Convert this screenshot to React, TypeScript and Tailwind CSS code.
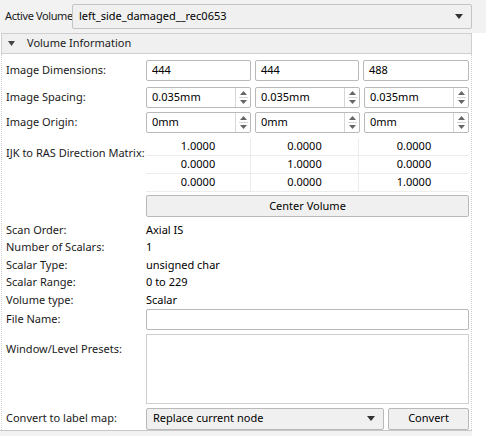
import React from 'react';

const font = { fontFamily: '"Noto Sans", "DejaVu Sans", sans-serif' };

function DownArrow() {
  return (
    <svg width="8" height="5" viewBox="0 0 8 5" className="shrink-0">
      <path d="M0 0 L8 0 L4 5 Z" fill="#333" />
    </svg>
  );
}

function LineEdit({ value, className = '' }: { value: string; className?: string }) {
  return (
    <div className={'h-[21px] bg-white border border-[#b9b9b9] rounded-[2px] flex items-center px-[5px] text-[11px] text-black ' + className}>
      {value}
    </div>
  );
}

function SpinBox({ value }: { value: string }) {
  return (
    <div className="flex-1 h-[21px] bg-white border border-[#b9b9b9] rounded-[2px] flex items-stretch text-[11px] text-black">
      <div className="flex-1 flex items-center px-[5px]">{value}</div>
      <div className="w-[15px] border-l border-[#d6d6d6] flex flex-col items-center justify-center gap-[2px]">
        <svg width="7" height="4" viewBox="0 0 7 4">
          <path d="M0 4 L7 4 L3.5 0 Z" fill="#666" />
        </svg>
        <div className="w-[9px] h-px bg-[#d6d6d6]" />
        <svg width="7" height="4" viewBox="0 0 7 4">
          <path d="M0 0 L7 0 L3.5 4 Z" fill="#666" />
        </svg>
      </div>
    </div>
  );
}

function Row({ label, children, className = '' }: { label: string; children: React.ReactNode; className?: string }) {
  return (
    <div className={'flex items-center ' + className}>
      <div className="w-[140px] shrink-0 text-[11px] text-[#1a1a1a]">{label}</div>
      <div className="flex-1 flex gap-[4px]">{children}</div>
    </div>
  );
}

const matrix = [
  ['1.0000', '0.0000', '0.0000'],
  ['0.0000', '1.0000', '0.0000'],
  ['0.0000', '0.0000', '1.0000'],
];

const info: [string, string][] = [
  ['Scan Order:', 'Axial IS'],
  ['Number of Scalars:', '1'],
  ['Scalar Type:', 'unsigned char'],
  ['Scalar Range:', '0 to 229'],
  ['Volume type:', 'Scalar'],
];

export default function App() {
  return (
    <div className="w-[486px] h-[436px] bg-white flex flex-col overflow-hidden" style={font}>
      {/* Active volume selector */}
      <div className="h-[33px] bg-[#f2f2f2] flex items-center pl-[5px] pr-[14px]">
        <div className="w-[67px] shrink-0 whitespace-nowrap text-[11px] tracking-[-0.4px] text-[#1a1a1a]">Active Volume</div>
        <div className="flex-1 h-[25px] bg-[#f0f0f0] border border-[#c4c4c4] rounded-[2px] flex items-center justify-between pl-[6px] pr-[8px] text-[11px] text-black">
          <span>left_side_damaged__rec0653</span>
          <DownArrow />
        </div>
      </div>

      {/* Collapsible header */}
      <div className="mx-[1px] mr-[14px] h-[21px] bg-[#f0f0f0] border border-[#cfcfcf] flex items-center pl-[6px] gap-[12px] text-[11px] text-[#1a1a1a]">
        <svg width="7" height="5" viewBox="0 0 7 5">
          <path d="M0 0 L7 0 L3.5 5 Z" fill="#444" />
        </svg>
        <span>Volume Information</span>
      </div>

      {/* Content */}
      <div className="flex-1 mx-[1px] mr-[14px] border-x border-dotted border-[#d0d0d0] pl-[4px] pr-[2px] flex flex-col">
        <Row label="Image Dimensions:" className="mt-[6px]">
          <LineEdit value="444" className="w-[105px]" />
          <LineEdit value="444" className="w-[104px]" />
          <LineEdit value="488" className="flex-1" />
        </Row>
        <Row label="Image Spacing:" className="mt-[6px]">
          <SpinBox value="0.035mm" />
          <SpinBox value="0.035mm" />
          <SpinBox value="0.035mm" />
        </Row>
        <Row label="Image Origin:" className="mt-[4px]">
          <SpinBox value="0mm" />
          <SpinBox value="0mm" />
          <SpinBox value="0mm" />
        </Row>

        {/* Direction matrix */}
        <div className="flex mt-[5px]">
          <div className="w-[140px] shrink-0 text-[11px] text-[#1a1a1a] pt-[7px]">IJK to RAS Direction Matrix:</div>
          <div className="flex-1 grid grid-cols-[105px_108px_1fr]">
            {matrix.map((r, i) =>
              r.map((v, j) => (
                <div
                  key={i + '-' + j}
                  className={
                    'h-[18px] flex items-center justify-center text-[11px] text-black border-b border-[#ececec] ' +
                    (j < 2 ? 'border-r' : '')
                  }
                >
                  {v}
                </div>
              ))
            )}
          </div>
        </div>

        <Row label="" className="mt-[3px]">
          <div className="flex-1 h-[22px] bg-[#f0f0f0] border border-[#b9b9b9] rounded-[2px] flex items-center justify-center text-[11px] text-black">
            Center Volume
          </div>
        </Row>

        <div className="flex flex-col mt-[4px]">
          {info.map(([k, v]) => (
            <div key={k} className="flex items-center h-[17.5px]">
              <div className="w-[140px] shrink-0 text-[11px] text-[#1a1a1a]">{k}</div>
              <div className="text-[11px] text-black">{v}</div>
            </div>
          ))}
        </div>

        <Row label="File Name:">
          <LineEdit value="" className="flex-1" />
        </Row>

        <div className="flex mt-[4px]">
          <div className="w-[139px] shrink-0 text-[11px] text-[#1a1a1a] pt-[7px]">Window/Level Presets:</div>
          <div className="flex-1 h-[70px] bg-white border border-[#cfcfcf] ml-[1px]" />
        </div>

        <Row label="Convert to label map:" className="mt-[4px]">
          <div className="w-[238px] h-[22px] bg-[#f0f0f0] border border-[#b9b9b9] rounded-[2px] flex items-center justify-between pl-[6px] pr-[8px] text-[11px] text-black">
            <span>Replace current node</span>
            <DownArrow />
          </div>
          <div className="flex-1 h-[22px] bg-[#f0f0f0] border border-[#b9b9b9] rounded-[2px] flex items-center justify-center text-[11px] text-black">
            Convert
          </div>
        </Row>
      </div>
      <div className="h-[6px] border-t border-[#c8c8c8] bg-[#f2f2f2] mr-[14px]" />
    </div>
  );
}
